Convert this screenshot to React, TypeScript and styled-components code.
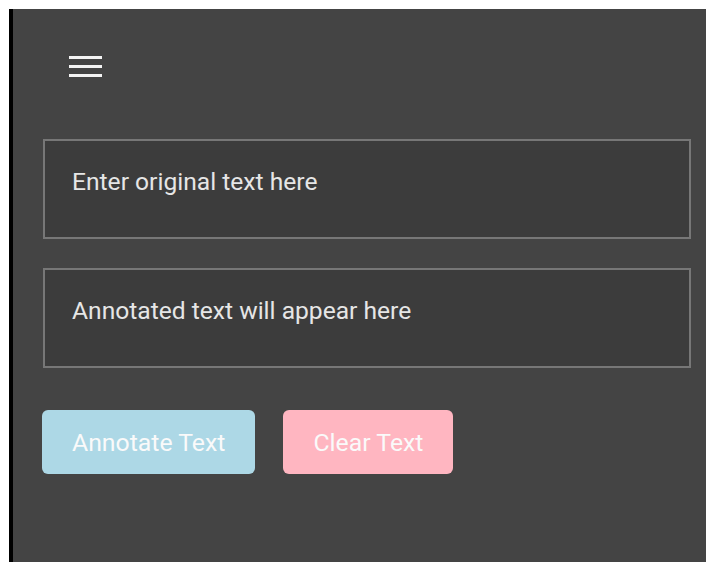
import React, { useState } from 'react'
import styled, { createGlobalStyle } from 'styled-components'

const GlobalStyle = createGlobalStyle`
  html, body {
    margin: 0;
    padding: 0;
    background: #ffffff;
    font-family: Roboto, "Liberation Sans", sans-serif;
  }
`

const Shell = styled.div`
  margin: 9px 0 0 9px;
  min-height: 553px;
  box-sizing: border-box;
  background: #444444;
  border-left: 4px solid #000000;
  padding: 47px 15px 0 29px;
`

const MenuButton = styled.button`
  display: flex;
  flex-direction: column;
  gap: 6px;
  background: none;
  border: 0;
  padding: 0;
  margin: 0 0 0 27px;
  cursor: pointer;

  span {
    display: block;
    width: 33px;
    height: 3px;
    background: #f4f4f4;
  }
`

const Fields = styled.div`
  display: flex;
  flex-direction: column;
  gap: 29px;
  margin-top: 62px;
  width: 649px;
`

const Field = styled.div`
  box-sizing: border-box;
  height: 100px;
  margin-left: 1px;
  background: #3c3c3c;
  border: 2px solid #777777;
  padding: 27px 27px;
  color: #e6e6e6;
  font-size: 24.6px;
  line-height: 28px;
  outline: none;

  &:empty::before {
    content: attr(data-placeholder);
    color: #e6e6e6;
  }
`

const Actions = styled.div`
  display: flex;
  gap: 28px;
  margin-top: 42px;
`

const ActionButton = styled.button<{ $tone: 'blue' | 'pink' }>`
  height: 64px;
  padding: 0 30px;
  border: 0;
  border-radius: 6px;
  background: ${(p) => (p.$tone === 'blue' ? '#add8e6' : '#ffb6c1')};
  color: #fafafa;
  font-family: Roboto, "Liberation Sans", sans-serif;
  font-size: 24.8px;
  cursor: pointer;
`

const App = () => {
  const [original, setOriginal] = useState('')
  const [annotated, setAnnotated] = useState('')

  return (
    <>
      <GlobalStyle />
      <Shell>
        <MenuButton aria-label="menu">
          <span />
          <span />
          <span />
        </MenuButton>
        <Fields>
          <Field
            contentEditable
            suppressContentEditableWarning
            data-placeholder="Enter original text here"
            onInput={(e) => setOriginal(e.currentTarget.textContent || '')}
          />
          <Field data-placeholder="Annotated text will appear here">{annotated}</Field>
        </Fields>
        <Actions>
          <ActionButton $tone="blue" onClick={() => setAnnotated(original)}>
            Annotate Text
          </ActionButton>
          <ActionButton $tone="pink" onClick={() => { setOriginal(''); setAnnotated('') }}>
            Clear Text
          </ActionButton>
        </Actions>
      </Shell>
    </>
  )
}

export default App
